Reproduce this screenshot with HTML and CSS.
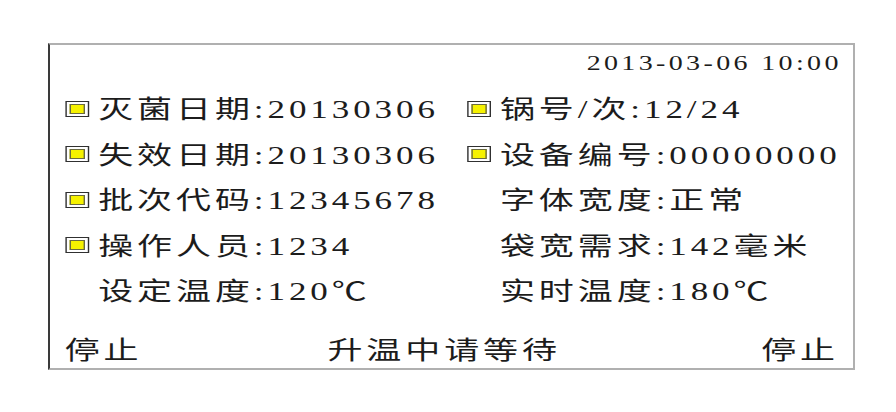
FILE: index.html
```html
<!DOCTYPE html>
<html lang="zh-CN">
<head>
<meta charset="utf-8">
<title>灭菌状态</title>
<link rel="stylesheet" href="styles.css">
</head>
<body>
<div class="frame">
  <div class="inner">
    <div class="date">2013-03-06 10:00</div>
    <div class="grid">
      <div class="item"><span class="mark"><span class="dot"></span></span><span class="txt">灭菌日期:20130306</span></div>
      <div class="item"><span class="mark"><span class="dot"></span></span><span class="txt">锅号/次:12/24</span></div>
      <div class="item"><span class="mark"><span class="dot"></span></span><span class="txt">失效日期:20130306</span></div>
      <div class="item"><span class="mark"><span class="dot"></span></span><span class="txt">设备编号:00000000</span></div>
      <div class="item"><span class="mark"><span class="dot"></span></span><span class="txt">批次代码:12345678</span></div>
      <div class="item"><span class="slot"></span><span class="txt">字体宽度:正常</span></div>
      <div class="item"><span class="mark"><span class="dot"></span></span><span class="txt">操作人员:1234</span></div>
      <div class="item"><span class="slot"></span><span class="txt">袋宽需求:142毫米</span></div>
      <div class="item"><span class="slot"></span><span class="txt">设定温度:120℃</span></div>
      <div class="item"><span class="slot"></span><span class="txt">实时温度:180℃</span></div>
    </div>
    <div class="footer">
      <span class="btn">停止</span>
      <span class="status">升温中请等待</span>
      <span class="btn">停止</span>
    </div>
  </div>
</div>
</body>
</html>
```

FILE: styles.css
```css
html, body {
  margin: 0;
  padding: 0;
  background: #ffffff;
}

body {
  font-family: "Liberation Serif", "Noto Sans CJK SC", serif;
  color: #1c1c1c;
}

.frame {
  box-sizing: border-box;
  width: 807px;
  height: 327px;
  margin: 43px 0 0 48px;
  border: 2px solid #b0b0b0;
  border-left: 2px solid #3a3a3a;
  overflow: hidden;
}

.inner {
  box-sizing: border-box;
  width: 573.6px;
  height: 323px;
  display: flex;
  flex-direction: column;
  transform: scaleX(1.4);
  transform-origin: left top;
}

.date {
  height: 36px;
  line-height: 36px;
  margin-bottom: 6px;
  font-size: 20px;
  letter-spacing: 2.4px;
  text-align: right;
  padding-right: 8px;
}

.grid {
  display: grid;
  grid-template-columns: 287px 1fr;
  grid-auto-rows: 45.5px;
  padding-left: 11.4px;
}

.item {
  display: flex;
  align-items: center;
  font-size: 25px;
  letter-spacing: 2.8px;
  white-space: nowrap;
}

.mark,
.slot {
  flex: none;
  width: 17px;
  height: 16px;
  margin-right: 6px;
  box-sizing: border-box;
}

.mark {
  border: 1px solid #303030;
  background: #ffffff;
  padding: 2px 2px;
  display: flex;
  margin-top: -2px;
}

.dot {
  flex: 1;
  background: #f6f200;
  border: 1px solid #6a6a40;
}

.txt {
  line-height: 45px;
}

.footer {
  margin-top: auto;
  height: 34px;
  line-height: 34px;
  display: flex;
  justify-content: space-between;
  align-items: center;
  padding: 0 10px 0 10.5px;
  font-size: 25px;
  letter-spacing: 2.8px;
  white-space: nowrap;
}

.status {
  margin-right: 11px;
}
```
